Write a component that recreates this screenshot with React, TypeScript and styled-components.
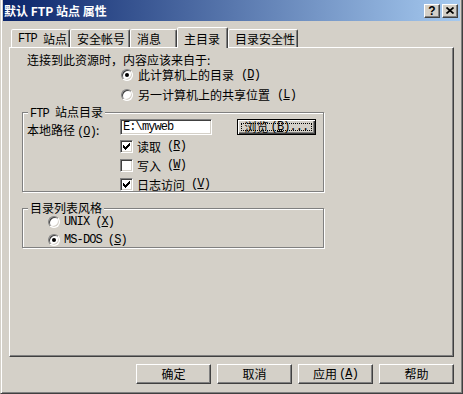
import React from "react";
import styled, { createGlobalStyle } from "styled-components";

const GlobalStyle = createGlobalStyle`
  html, body {
    margin: 0;
    padding: 0;
    background: #d4d0c8;
  }
  body {
    font-family: "Noto Sans CJK SC", "Noto Sans", sans-serif;
    font-size: 12px;
    line-height: 14px;
    color: #000;
  }
  * {
    box-sizing: border-box;
  }
`;

const Window = styled.div`
  width: 463px;
  height: 394px;
  background: #d4d0c8;
  border-style: solid;
  border-width: 0 1px 1px 1px;
  border-color: #d4d0c8 #404040 #404040 #d4d0c8;
  box-shadow: inset 1px 0 #fff, inset -1px -1px #808080;
  padding: 0 2px 2px 2px;
  display: flex;
  flex-direction: column;
`;

const TitleBar = styled.div`
  height: 21px;
  display: flex;
  align-items: center;
  padding: 0 2px 0 1px;
  background: linear-gradient(to right, #0a246a, #a6caf0);
  color: #fff;
  font-weight: bold;
`;

const Title = styled.span`
  flex: 1;
  white-space: nowrap;
`;

const CaptionButton = styled.div`
  width: 16px;
  height: 14px;
  margin-left: 2px;
  display: flex;
  align-items: center;
  justify-content: center;
  background: #d4d0c8;
  border: 1px solid;
  border-color: #fff #404040 #404040 #fff;
  box-shadow: inset -1px -1px #808080;
  font: bold 12px "Liberation Sans", sans-serif;
  color: #000;
  line-height: 12px;
`;

const Body = styled.div`
  flex: 1;
  display: flex;
  flex-direction: column;
  padding: 6px 6px 0 6px;
`;

const TabRow = styled.div`
  height: 20px;
  margin-left: 2px;
  display: flex;
  align-items: flex-end;
`;

const Tab = styled.div<{ $active?: boolean; $w: number }>`
  position: relative;
  z-index: ${(p) => (p.$active ? 2 : 1)};
  width: ${(p) => p.$w}px;
  height: ${(p) => (p.$active ? 21 : 18)}px;
  margin-bottom: ${(p) => (p.$active ? -1 : 0)}px;
  padding: 1px 0 0 6px;
  display: flex;
  align-items: center;
  background: #d4d0c8;
  border-style: solid;
  border-width: 1px 1px 0 1px;
  border-color: #fff #404040 transparent #fff;
  box-shadow: inset -1px 0 #808080;
  border-top-left-radius: 2px;
  border-top-right-radius: 2px;
  white-space: nowrap;
`;

const Panel = styled.div`
  height: 310px;
  padding: 5px 0 0 12px;
  border: 1px solid;
  border-color: #fff #404040 #404040 #fff;
  box-shadow: inset -1px -1px #808080;
  display: flex;
  flex-direction: column;
`;

const Intro = styled.div`
  height: 14px;
  padding-left: 5px;
  white-space: nowrap;
`;

const OptionList = styled.div<{ $indent: number; $gap: number }>`
  display: flex;
  flex-direction: column;
  gap: ${(p) => p.$gap}px;
  margin-left: ${(p) => p.$indent}px;
`;

const Option = styled.label<{ $h: number; $gap: number }>`
  height: ${(p) => p.$h}px;
  display: flex;
  align-items: center;
  gap: ${(p) => p.$gap}px;
  white-space: nowrap;
  line-height: ${(p) => p.$h}px;
`;

const RadioCircle = styled.span<{ $checked?: boolean }>`
  flex: none;
  width: 12px;
  height: 12px;
  border-radius: 50%;
  border: 1px solid;
  border-color: #808080 #fff #fff #808080;
  box-shadow: inset 1px 1px #404040, inset -1px -1px #d4d0c8;
  background: #fff;
  display: flex;
  align-items: center;
  justify-content: center;
  &::after {
    content: "";
    width: 4px;
    height: 4px;
    border-radius: 50%;
    background: ${(p) => (p.$checked ? "#000" : "transparent")};
  }
`;

const CheckBox = styled.span`
  flex: none;
  width: 13px;
  height: 13px;
  border: 1px solid;
  border-color: #808080 #fff #fff #808080;
  box-shadow: inset 1px 1px #404040, inset -1px -1px #d4d0c8;
  background: #fff;
  display: flex;
  align-items: center;
  justify-content: center;
`;

const Group = styled.fieldset<{ $top: number }>`
  width: 302px;
  min-width: 0;
  margin: ${(p) => p.$top}px 0 0 0;
  padding: 0;
  border: 1px solid #808080;
  box-shadow: inset 1px 1px #fff, 1px 1px #fff;
`;

const Legend = styled.legend`
  margin-left: 5px;
  padding: 0 2px;
  height: 14px;
  background: #d4d0c8;
  white-space: nowrap;
`;

const PathRow = styled.div`
  height: 16px;
  display: flex;
  align-items: center;
`;

const FieldLabel = styled.span`
  align-self: flex-start;
  width: 97px;
  height: 14px;
  margin-top: 4px;
  padding-left: 4px;
  white-space: nowrap;
`;

const TextInput = styled.div`
  width: 92px;
  height: 16px;
  padding: 0 0 0 2px;
  border: 1px solid;
  border-color: #808080 #fff #fff #808080;
  box-shadow: inset 1px 1px #404040, inset -1px -1px #d4d0c8;
  background: #fff;
  display: flex;
  align-items: center;
  font-family: "Liberation Mono", monospace;
  font-size: 12px;
  letter-spacing: -0.9px;
`;

const DefaultButton = styled.div`
  width: 79px;
  height: 16px;
  margin-left: 25px;
  padding: 3px;
  display: flex;
  background: #d4d0c8;
  border: 1px solid #000;
  box-shadow: inset 1px 1px #fff, inset -1px -1px #404040, inset -2px -2px #808080;
`;

const FocusRing = styled.span`
  flex: 1;
  border: 1px dotted #000;
  display: flex;
  align-items: center;
  justify-content: center;
  line-height: 8px;
  white-space: nowrap;
`;

const Latin = styled.span<{ $space?: number }>`
  font-family: "Liberation Mono", monospace;
  font-size: 12px;
  letter-spacing: -0.9px;
  margin-right: ${(p) => p.$space ?? 0}px;
`;

const KeyHint = styled.span`
  font-family: "Liberation Mono", monospace;
  font-size: 12px;
  letter-spacing: -0.9px;
  margin-left: 2px;
  & > u {
    text-underline-offset: 1px;
  }
`;

const Footer = styled.div`
  margin-top: 7px;
  display: flex;
  justify-content: flex-end;
  gap: 6px;
`;

const PushButton = styled.div`
  width: 75px;
  height: 20px;
  display: flex;
  align-items: center;
  justify-content: center;
  background: #d4d0c8;
  border: 1px solid;
  border-color: #fff #404040 #404040 #fff;
  box-shadow: inset -1px -1px #808080;
  white-space: nowrap;
`;

function Key({ k }: { k: string }) {
  return (
    <KeyHint>
      (<u>{k}</u>)
    </KeyHint>
  );
}

function CheckMark() {
  return (
    <svg width="7" height="7" viewBox="0 0 7 7" shapeRendering="crispEdges">
      <polygon points="0,2 2,4 7,-1 7,2 2,7 0,5" fill="#000" />
    </svg>
  );
}

function CloseGlyph() {
  return (
    <svg width="8" height="7" viewBox="0 0 8 7">
      <path d="M0.5 0.5 L7.5 6.5 M7.5 0.5 L0.5 6.5" stroke="#000" strokeWidth="1.7" />
    </svg>
  );
}

const tabs = [
  { label: <><Latin $space={6}>FTP</Latin>站点</>, w: 59 },
  { label: "安全帐号", w: 60 },
  { label: "消息", w: 47 },
  { label: "主目录", w: 51, active: true },
  { label: "目录安全性", w: 70 },
];

export default function App() {
  return (
    <>
      <GlobalStyle />
      <Window>
        <TitleBar>
          <Title>默认 FTP 站点 属性</Title>
          <CaptionButton>?</CaptionButton>
          <CaptionButton>
            <CloseGlyph />
          </CaptionButton>
        </TitleBar>
        <Body>
          <TabRow>
            {tabs.map((t, i) => (
              <Tab key={i} $w={t.w} $active={t.active}>
                {t.label}
              </Tab>
            ))}
          </TabRow>
          <Panel>
            <Intro>连接到此资源时，内容应该来自于:</Intro>
            <OptionList $indent={99} $gap={6} style={{ marginTop: 1 }}>
              <Option $h={14} $gap={5}>
                <RadioCircle $checked />
                此计算机上的目录<Key k="D" />
              </Option>
              <Option $h={14} $gap={5}>
                <RadioCircle />
                另一计算机上的共享位置<Key k="L" />
              </Option>
            </OptionList>

            <Group $top={3}>
              <Legend>
                <Latin $space={6}>FTP</Latin>站点目录
              </Legend>
              <PathRow>
                <FieldLabel>
                  本地路径<Key k="O" />:
                </FieldLabel>
                <TextInput>{"E:\\myweb"}</TextInput>
                <DefaultButton>
                  <FocusRing>
                    浏览<Key k="B" />
                    <Latin>...</Latin>
                  </FocusRing>
                </DefaultButton>
              </PathRow>
              <OptionList $indent={97} $gap={6} style={{ marginTop: 5 }}>
                <Option $h={13} $gap={4}>
                  <CheckBox>
                    <CheckMark />
                  </CheckBox>
                  读取<Key k="R" />
                </Option>
                <Option $h={13} $gap={4}>
                  <CheckBox />
                  写入<Key k="W" />
                </Option>
                <Option $h={13} $gap={4}>
                  <CheckBox>
                    <CheckMark />
                  </CheckBox>
                  日志访问<Key k="V" />
                </Option>
              </OptionList>
            </Group>

            <Group $top={9}>
              <Legend>目录列表风格</Legend>
              <OptionList $indent={25} $gap={6} style={{ padding: "1px 0" }}>
                <Option $h={12} $gap={4}>
                  <RadioCircle />
                  <Latin>UNIX</Latin>
                  <Key k="X" />
                </Option>
                <Option $h={12} $gap={4}>
                  <RadioCircle $checked />
                  <Latin>MS-DOS</Latin>
                  <Key k="S" />
                </Option>
              </OptionList>
            </Group>
          </Panel>
          <Footer>
            <PushButton>确定</PushButton>
            <PushButton>取消</PushButton>
            <PushButton>
              应用<Key k="A" />
            </PushButton>
            <PushButton>帮助</PushButton>
          </Footer>
        </Body>
      </Window>
    </>
  );
}
